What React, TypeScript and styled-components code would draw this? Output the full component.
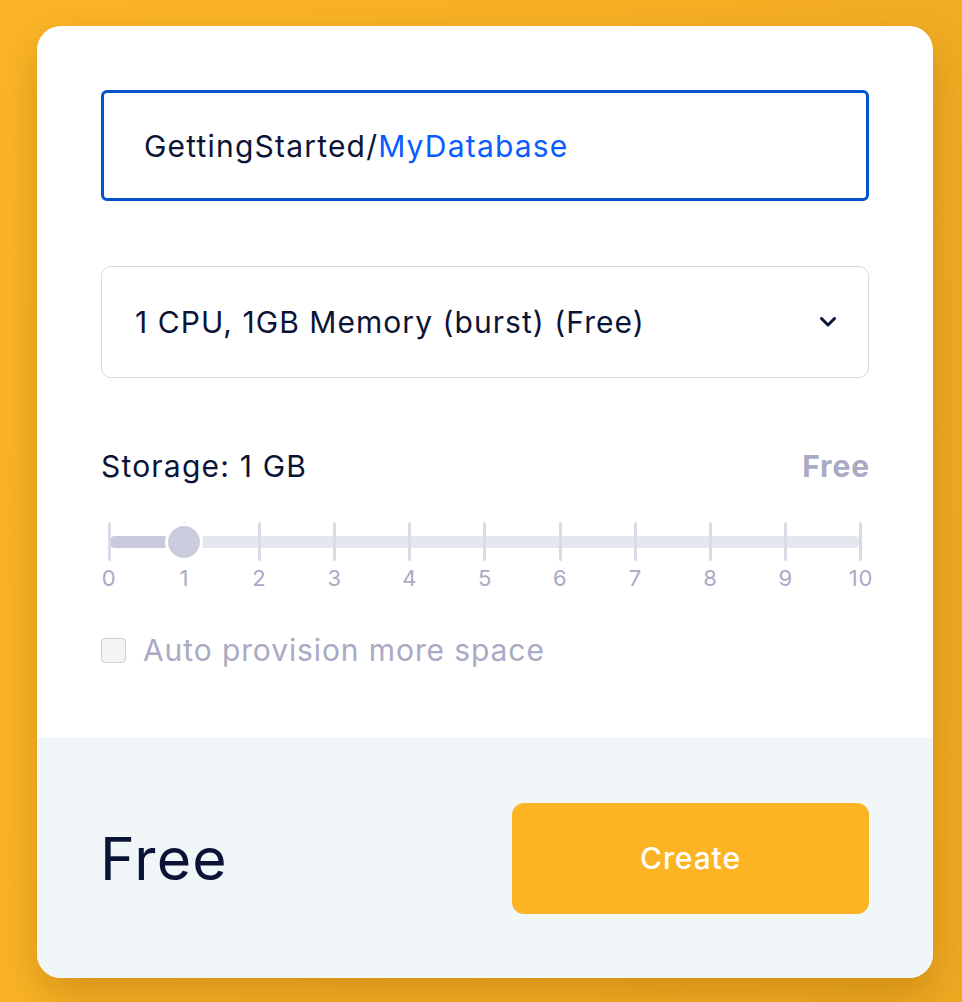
import React from "react";
import styled, { createGlobalStyle } from "styled-components";

const Global = createGlobalStyle`
  html, body { margin: 0; padding: 0; }
  body {
    font-family: Inter, "Noto Sans", sans-serif;
    background: linear-gradient(100deg, #fbb526 0%, #f6b024 60%, #eeaa22 100%);
    min-height: 1002px;
  }
  * { box-sizing: border-box; }
`;

const Page = styled.div`
  padding: 26px 29px 24px 37px;
  min-height: 1002px;
`;

const Card = styled.div`
  width: 896px;
  height: 952px;
  background: #fff;
  border-radius: 24px;
  overflow: hidden;
  display: flex;
  flex-direction: column;
  box-shadow: 0 18px 40px rgba(150, 90, 0, 0.35);
`;

const Body = styled.div`
  flex: 1;
  padding: 64px 64px 0 64px;
  display: flex;
  flex-direction: column;
`;

const NameInput = styled.div`
  height: 111px;
  border: 3px solid #0055cc;
  border-radius: 6px;
  padding-left: 40px;
  display: flex;
  align-items: center;
  font-size: 30px;
  color: #0b1437;
  letter-spacing: 0.04em;
`;

const Blue = styled.span`
  color: #0a5cff;
`;

const Select = styled.div`
  margin-top: 65px;
  height: 112px;
  border: 1.5px solid #d8d9de;
  border-radius: 10px;
  padding: 0 32px 0 33px;
  display: flex;
  align-items: center;
  justify-content: space-between;
  font-size: 30px;
  letter-spacing: 0.035em;
  color: #0b1437;
`;

const StorageRow = styled.div`
  margin-top: 72px;
  display: flex;
  justify-content: space-between;
  align-items: center;
  height: 32px;
`;

const StorageLabel = styled.span`
  font-size: 30px;
  letter-spacing: 0.04em;
  color: #0b1437;
`;

const StorageFree = styled.span`
  font-size: 30px;
  font-weight: 700;
  letter-spacing: 0.03em;
  margin-right: -1px;
  color: #a9aac4;
`;

const Slider = styled.div`
  position: relative;
  margin: 40px 8px 0 8px;
`;

const Track = styled.div`
  position: absolute;
  left: 0;
  right: 0;
  top: 14px;
  height: 12px;
  border-radius: 6px;
  background: #e4e8ee;
`;

const Fill = styled.div`
  position: absolute;
  left: 0;
  top: 0;
  bottom: 0;
  border-radius: 6px;
  background: #c9cbdc;
`;

const Thumb = styled.div`
  position: absolute;
  top: 20px;
  width: 38px;
  height: 38px;
  margin: -19px 0 0 -19px;
  border-radius: 50%;
  background: #cbccdd;
  border: 3px solid #fff;
`;

const Ticks = styled.div`
  display: flex;
  justify-content: space-between;
`;

const TickCol = styled.div`
  width: 0;
  display: flex;
  flex-direction: column;
  align-items: center;
`;

const TickLine = styled.div`
  width: 3px;
  flex: none;
  height: 39px;
  border-radius: 1.5px;
  background: #dadae6;
  position: relative;
  z-index: 1;
`;

const TickLabel = styled.span`
  margin-top: 5px;
  font-size: 22px;
  line-height: 24px;
  letter-spacing: 0.03em;
  color: #a9aac5;
  white-space: nowrap;
`;

const CheckRow = styled.label`
  margin-top: 42px;
  display: flex;
  align-items: center;
  gap: 17px;
  font-size: 30px;
  letter-spacing: 0.03em;
  color: #a9aac4;
`;

const Box = styled.span`
  width: 25px;
  height: 25px;
  border-radius: 4px;
  border: 1.5px solid #cfcfd3;
  background: #f4f4f6;
  flex: none;
`;

const Footer = styled.div`
  height: 240px;
  background: #f1f6f9;
  display: flex;
  align-items: center;
  justify-content: space-between;
  padding: 0 64px 0 63px;
`;

const Price = styled.span`
  font-size: 59px;
  color: #0b1437;
  letter-spacing: 0.02em;
`;

const CreateButton = styled.button`
  width: 357px;
  height: 111px;
  border: none;
  border-radius: 12px;
  background: #fcb425;
  color: #fff;
  font-family: inherit;
  font-size: 30px;
  font-weight: 500;
  letter-spacing: 0.03em;
  cursor: pointer;
`;

const ticks = [0, 1, 2, 3, 4, 5, 6, 7, 8, 9, 10];
const value = 1;

export default function App() {
  const pct = (value / 10) * 100;
  return (
    <>
      <Global />
      <Page>
        <Card>
          <Body>
            <NameInput>
              GettingStarted/<Blue>MyDatabase</Blue>
            </NameInput>
            <Select>
              <span>1 CPU, 1GB Memory (burst) (Free)</span>
              <svg width="16" height="10" viewBox="0 0 16 10" fill="none">
                <path d="M1.5 1.5 L8 8 L14.5 1.5" stroke="#0b1437" strokeWidth="3" strokeLinecap="round" strokeLinejoin="round" />
              </svg>
            </Select>
            <StorageRow>
              <StorageLabel>Storage: 1 GB</StorageLabel>
              <StorageFree>Free</StorageFree>
            </StorageRow>
            <Slider>
              <Track>
                <Fill style={{ width: `${pct}%` }} />
              </Track>
              <Ticks>
                {ticks.map((t) => (
                  <TickCol key={t}>
                    <TickLine />
                    <TickLabel>{t}</TickLabel>
                  </TickCol>
                ))}
              </Ticks>
              <Thumb style={{ left: `${pct}%`, zIndex: 2 }} />
            </Slider>
            <CheckRow>
              <Box />
              Auto provision more space
            </CheckRow>
          </Body>
          <Footer>
            <Price>Free</Price>
            <CreateButton>Create</CreateButton>
          </Footer>
        </Card>
      </Page>
    </>
  );
}
